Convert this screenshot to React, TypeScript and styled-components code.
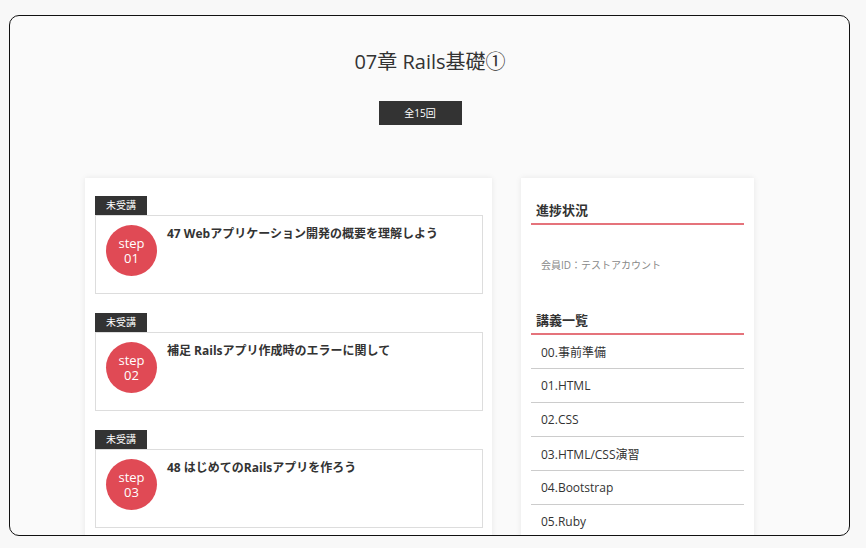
import React from 'react';
import styled, { createGlobalStyle } from 'styled-components';

const GlobalStyle = createGlobalStyle`
	html, body {
		margin: 0;
		padding: 0;
		background-color: #f8f8f8;
	}

	body {
		font-family: 'Open Sans', 'Noto Sans CJK JP', sans-serif;
		color: #333;
	}
`;

type Lesson = {
	step: string;
	title: string;
};

const lessons: Lesson[] = [
	{ step: '01', title: '47 Webアプリケーション開発の概要を理解しよう' },
	{ step: '02', title: '補足 Railsアプリ作成時のエラーに関して' },
	{ step: '03', title: '48 はじめてのRailsアプリを作ろう' },
];

const chapters = ['00.事前準備', '01.HTML', '02.CSS', '03.HTML/CSS演習', '04.Bootstrap', '05.Ruby'];

const App: React.FC = () => (
	<>
		<GlobalStyle />
		<Window>
			<Header>
				<Title>07章 Rails基礎①</Title>
				<Count>全15回</Count>
			</Header>
			<Columns>
				<MainCard>
					{lessons.map((lesson) => (
						<LessonItem key={lesson.step}>
							<Status>未受講</Status>
							<LessonBox>
								<StepCircle>
									<StepWord>step</StepWord>
									<StepWord>{lesson.step}</StepWord>
								</StepCircle>
								<LessonTitle>{lesson.title}</LessonTitle>
							</LessonBox>
						</LessonItem>
					))}
				</MainCard>
				<SideCard>
					<SideHeading>進捗状況</SideHeading>
					<Member>会員ID：テストアカウント</Member>
					<SideHeading>講義一覧</SideHeading>
					<ChapterList>
						{chapters.map((chapter) => (
							<Chapter key={chapter}>{chapter}</Chapter>
						))}
					</ChapterList>
				</SideCard>
			</Columns>
		</Window>
	</>
);

const Window = styled.div`
	box-sizing: border-box;
	margin: 15px 0 0 9px;
	width: 841px;
	height: 521px;
	border: 1px solid #111;
	border-radius: 10px;
	background-color: #fafafa;
	overflow: hidden;
	padding: 31px 94px 0 75px;
`;

const Header = styled.div`
	display: flex;
	flex-direction: column;
	align-items: center;
`;

const Title = styled.h1`
	margin: 0 0 0 20px;
	font-size: 20px;
	line-height: 30px;
	font-weight: 400;
	color: #333;
`;

const Count = styled.div`
	margin-top: 24px;
	width: 83px;
	height: 24px;
	line-height: 24px;
	text-align: center;
	background-color: #333;
	color: #fff;
	font-size: 10px;
`;

const Columns = styled.div`
	display: flex;
	align-items: flex-start;
	gap: 29px;
	margin-top: 53px;
`;

const MainCard = styled.div`
	box-sizing: border-box;
	width: 407px;
	background-color: #fff;
	box-shadow: 0 0 6px rgba(0, 0, 0, 0.08);
	padding: 18px 9px 20px 10px;
	display: flex;
	flex-direction: column;
	gap: 19px;
`;

const LessonItem = styled.div`
	display: flex;
	flex-direction: column;
	align-items: flex-start;
`;

const Status = styled.div`
	width: 52px;
	height: 19px;
	line-height: 19px;
	text-align: center;
	background-color: #333;
	color: #fff;
	font-size: 10px;
`;

const LessonBox = styled.div`
	box-sizing: border-box;
	width: 100%;
	height: 79px;
	border: 1px solid #ddd;
	display: flex;
	align-items: flex-start;
	padding: 9px 10px;
	gap: 10px;
`;

const StepCircle = styled.div`
	flex: none;
	width: 51px;
	height: 51px;
	border-radius: 50%;
	background-color: #e04a55;
	color: #fff;
	display: flex;
	flex-direction: column;
	align-items: center;
	justify-content: center;
	gap: 1px;
`;

const StepWord = styled.span`
	font-size: 13px;
	line-height: 14px;
`;

const LessonTitle = styled.div`
	margin-top: 1px;
	font-size: 12px;
	line-height: 16px;
	font-weight: 700;
	color: #333;
`;

const SideCard = styled.div`
	box-sizing: border-box;
	width: 233px;
	background-color: #fff;
	box-shadow: 0 0 6px rgba(0, 0, 0, 0.08);
	padding: 23px 10px 20px;
`;

const SideHeading = styled.h2`
	margin: 0;
	padding: 0 5px 4px;
	font-size: 13px;
	line-height: 18px;
	font-weight: 700;
	color: #333;
	border-bottom: 2px solid #e5737b;
`;

const Member = styled.p`
	margin: 0;
	padding: 33px 10px 39px;
	font-size: 10px;
	line-height: 14px;
	color: #888;
`;

const ChapterList = styled.ul`
	list-style: none;
	margin: 0;
	padding: 0;
`;

const Chapter = styled.li`
	box-sizing: border-box;
	height: 34px;
	display: flex;
	align-items: center;
	padding: 0 10px;
	font-size: 12px;
	color: #333;
	border-bottom: 1px solid #ccc;
`;

export default App;
